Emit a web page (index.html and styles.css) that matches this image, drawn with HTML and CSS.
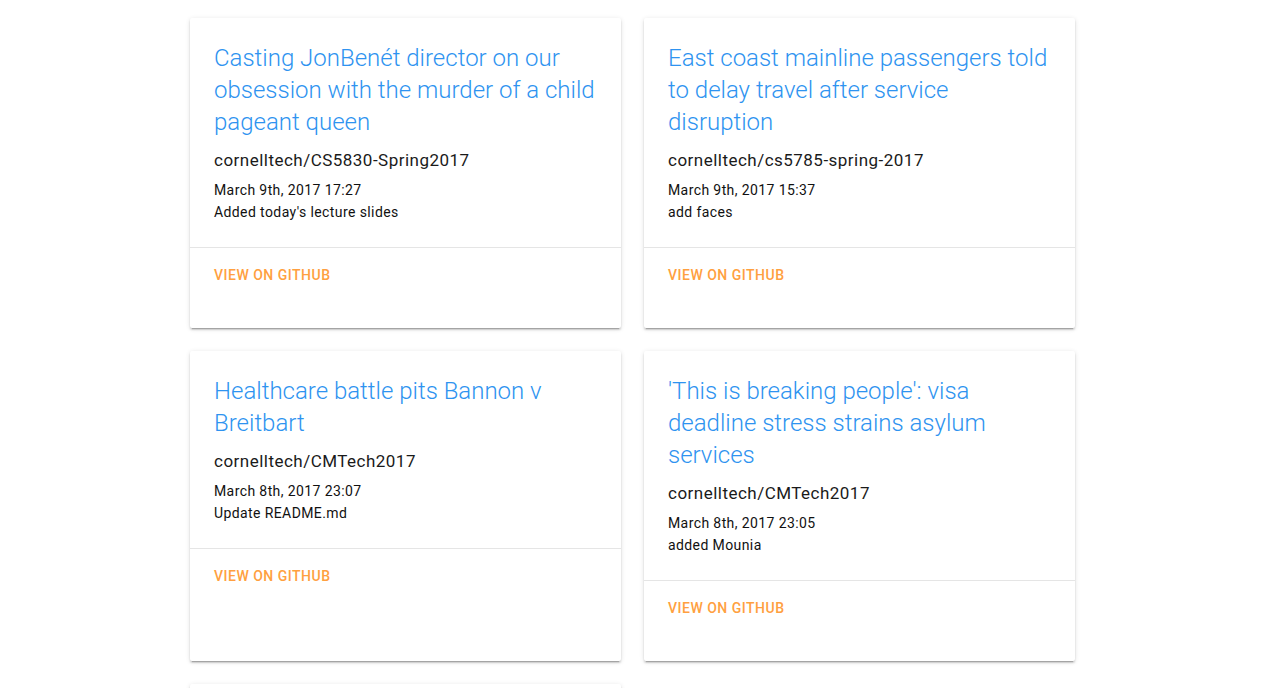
FILE: index.html
```html
<!DOCTYPE html>
<html lang="en">
<head>
<meta charset="utf-8">
<title>Commits</title>
<link rel="stylesheet" href="styles.css">
</head>
<body>
<main class="grid">
  <article class="card">
    <div class="card-text">
      <h2 class="card-title">Casting JonBenét director on our obsession with the murder of a child pageant queen</h2>
      <div class="repo">cornelltech/CS5830-Spring2017</div>
      <div class="meta">
        <div class="date">March 9th, 2017 17:27</div>
        <div class="msg">Added today's lecture slides</div>
      </div>
    </div>
    <div class="card-actions"><a class="btn">View on GitHub</a></div>
  </article>
  <article class="card">
    <div class="card-text">
      <h2 class="card-title">East coast mainline passengers told to delay travel after service disruption</h2>
      <div class="repo">cornelltech/cs5785-spring-2017</div>
      <div class="meta">
        <div class="date">March 9th, 2017 15:37</div>
        <div class="msg">add faces</div>
      </div>
    </div>
    <div class="card-actions"><a class="btn">View on GitHub</a></div>
  </article>
  <article class="card">
    <div class="card-text">
      <h2 class="card-title">Healthcare battle pits Bannon v Breitbart</h2>
      <div class="repo">cornelltech/CMTech2017</div>
      <div class="meta">
        <div class="date">March 8th, 2017 23:07</div>
        <div class="msg">Update README.md</div>
      </div>
    </div>
    <div class="card-actions"><a class="btn">View on GitHub</a></div>
  </article>
  <article class="card">
    <div class="card-text">
      <h2 class="card-title">'This is breaking people': visa deadline stress strains asylum services</h2>
      <div class="repo">cornelltech/CMTech2017</div>
      <div class="meta">
        <div class="date">March 8th, 2017 23:05</div>
        <div class="msg">added Mounia</div>
      </div>
    </div>
    <div class="card-actions"><a class="btn">View on GitHub</a></div>
  </article>
  <article class="card card-peek"></article>
</main>
</body>
</html>
```

FILE: styles.css
```css
html, body {
  margin: 0;
  padding: 0;
  background: #fff;
}

body {
  font-family: Roboto, "Helvetica Neue", Arial, sans-serif;
  color: rgba(0, 0, 0, 0.87);
}

.grid {
  width: 885px;
  margin: 0 auto;
  padding-top: 18px;
  display: grid;
  grid-template-columns: 431px 431px;
  column-gap: 23px;
  row-gap: 23px;
}

.card {
  display: flex;
  flex-direction: column;
  background: #fff;
  border-radius: 2px;
  box-shadow: 0 2px 2px 0 rgba(0, 0, 0, 0.14),
              0 3px 1px -2px rgba(0, 0, 0, 0.2),
              0 1px 5px 0 rgba(0, 0, 0, 0.12);
}

.card-peek {
  height: 310px;
}

.card-text {
  padding: 24px 24px 24px 24px;
}

.card-title {
  margin: 0;
  font-size: 24px;
  line-height: 32px;
  font-weight: 300;
  color: #2e93f0;
}

.repo {
  margin-top: 10px;
  font-size: 17px;
  line-height: 24px;
  letter-spacing: 0.48px;
  color: #1a1a1a;
}

.meta {
  margin-top: 7px;
  font-size: 14px;
  line-height: 22px;
  letter-spacing: 0.4px;
  color: #111;
}

.card-actions {
  flex: 1;
  border-top: 1px solid rgba(0, 0, 0, 0.1);
  padding: 9px 8px 35px 8px;
}

.btn {
  display: inline-block;
  height: 36px;
  line-height: 36px;
  padding: 0 16px;
  font-size: 14px;
  font-weight: 500;
  letter-spacing: 0.5px;
  text-transform: uppercase;
  color: #ffa040;
  cursor: pointer;
}
```
